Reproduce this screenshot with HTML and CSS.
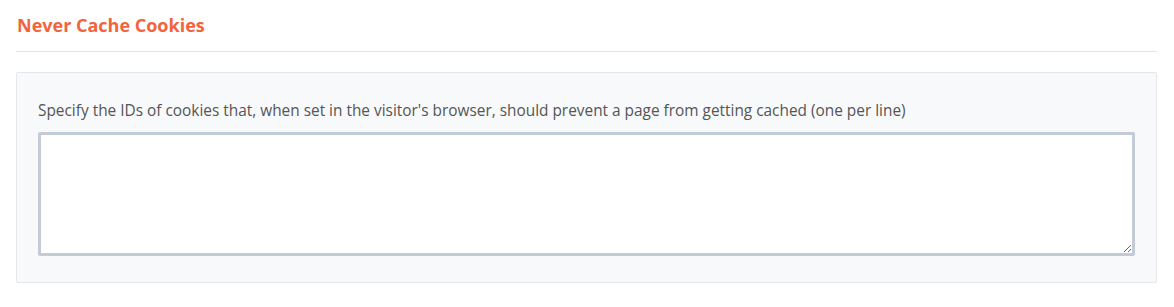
FILE: index.html
```html
<!DOCTYPE html>
<html lang="en">
<head>
    <meta charset="UTF-8">
    <meta name="viewport" content="width=device-width, initial-scale=1.0">
    <title>Never Cache Cookies</title>
    <link rel="stylesheet" href="styles.css">
</head>
<body>
    <div class="section">
        <h2 class="section-title">Never Cache Cookies</h2>
        <div class="panel">
            <label for="neverCacheCookies" class="field-label">Specify the IDs of cookies that, when set in the visitor's browser, should prevent a page from getting cached (one per line)</label>
            <textarea id="neverCacheCookies" class="field-input"></textarea>
        </div>
    </div>
</body>
</html>
```

FILE: styles.css
```css
body { margin: 0; padding: 0; background: #fff; font-family: "Open Sans", Arial, sans-serif; }
.section { padding: 0 17px 0 16px; }
.section-title { margin: 0; padding: 13px 0 14px 1px; font-size: 18px; font-weight: 700; color: #f2643d; border-bottom: 1px solid #e4e4e4; line-height: 24px; }
.panel { margin-top: 20px; padding: 27px 21px 26px; background: #f8f9fa; border: 1px solid #e5e7ea; border-radius: 2px; }
.field-label { display: block; font-size: 15.4px; color: #555; line-height: 22px; margin-bottom: 10px; }
.field-input { display: block; box-sizing: border-box; width: 100%; height: 124px; border: 3px solid #c3cbd6; border-radius: 2px; background: #fff; resize: vertical; }
```
